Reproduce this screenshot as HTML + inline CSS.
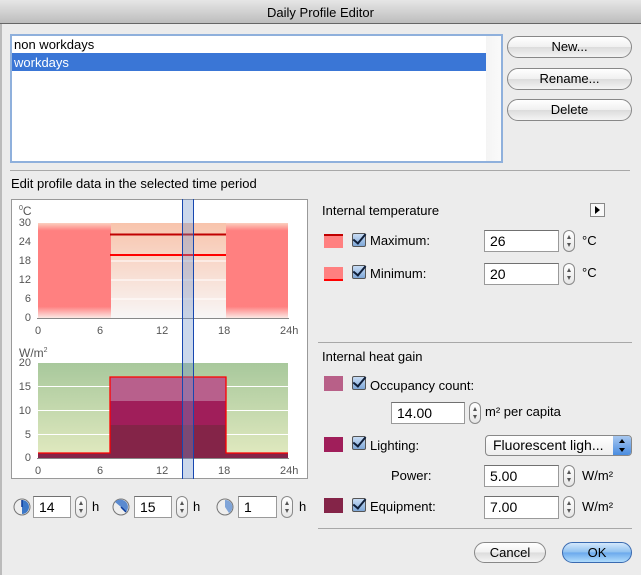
<!DOCTYPE html>
<html><head><meta charset="utf-8"><style>
*{box-sizing:border-box}
body{margin:0;width:641px;height:575px;background:#ececec;font-family:"Liberation Sans",sans-serif;font-size:13px;color:#000;position:relative;overflow:hidden}
.a{position:absolute}
.t{position:absolute;white-space:nowrap;line-height:16px}
.btn{position:absolute;border:1px solid #888;border-radius:11px;background:linear-gradient(#fff,#f0f0f0 50%,#dcdcdc 51%,#f4f4f4);text-align:center;line-height:20px;font-size:13px}
.inp{position:absolute;background:#fff;border:1px solid #9a9a9a;border-top-color:#707070;padding-left:5px;line-height:20px;font-size:14px}
.st{position:absolute;width:12px;height:22px;border:1px solid #8a8a8a;border-radius:6px;background:linear-gradient(#fff,#e6e6e6)}
.st:before{content:"";position:absolute;left:3px;top:4px;border:2.5px solid transparent;border-bottom:4px solid #555;border-top:0}
.st:after{content:"";position:absolute;left:3px;bottom:4px;border:2.5px solid transparent;border-top:4px solid #555;border-bottom:0}
.cb{position:absolute;width:14px;height:14px;border:1px solid #555;border-radius:2px;background:linear-gradient(#c8dcf4,#7fa8d8)}
.cb:after{content:"";position:absolute;left:3px;top:-3px;width:5px;height:11px;border:solid #0f1f3a;border-width:0 2.5px 2.5px 0;transform:rotate(40deg)}
.sw{position:absolute;width:19px;height:14px}
.line{position:absolute;height:1px;background:#a8a8a8}
.yl{position:absolute;font-size:11px;color:#555;text-align:right;width:20px}
.xl{position:absolute;font-size:11px;color:#555}
</style></head><body>
<div class="a" style="left:0;top:0;width:641px;height:24px;background:linear-gradient(#e6e6e6,#bdbdbd);border-bottom:1px solid #666"></div>
<div class="t" style="left:0;width:641px;text-align:center;top:5px">Daily Profile Editor</div>
<div class="a" style="left:0;top:24px;width:2px;height:551px;background:#bbb"></div>

<div class="a" style="left:10px;top:34px;width:493px;height:129px;border:2px solid #8fb0dc;background:#fff"></div>
<div class="a" style="left:486px;top:36px;width:15px;height:125px;background:linear-gradient(90deg,#f4f4f4,#fafafa)"></div>
<div class="t" style="left:14px;top:37px">non workdays</div>
<div class="a" style="left:12px;top:53px;width:474px;height:18px;background:#3a76d6"></div>
<div class="t" style="left:14px;top:55px;color:#fff">workdays</div>

<div class="btn" style="left:507px;top:36px;width:125px;height:22px">New...</div>
<div class="btn" style="left:507px;top:68px;width:125px;height:22px">Rename...</div>
<div class="btn" style="left:507px;top:99px;width:125px;height:22px">Delete</div>

<div class="line" style="left:10px;top:170px;width:620px"></div>
<div class="t" style="left:11px;top:176px">Edit profile data in the selected time period</div>

<div class="a" style="left:11px;top:199px;width:297px;height:280px;background:#fff;border:1px solid #999"></div>
<svg class="a" style="left:0;top:0" width="320" height="490">
<defs>
<linearGradient id="r" x1="0" y1="0" x2="0" y2="1"><stop offset="0" stop-color="#fbd0c0"/><stop offset=".08" stop-color="#ff8080"/><stop offset=".88" stop-color="#ff8080"/><stop offset="1" stop-color="#fbe8e4"/></linearGradient>
<linearGradient id="m" x1="0" y1="0" x2="0" y2="1"><stop offset="0" stop-color="#f8c4ac"/><stop offset=".5" stop-color="#f8dcd0"/><stop offset="1" stop-color="#f8f6f6"/></linearGradient>
<linearGradient id="g" x1="0" y1="0" x2="0" y2="1"><stop offset="0" stop-color="#a8c89c"/><stop offset="1" stop-color="#e2eac0"/></linearGradient>
</defs>
<rect x="38" y="223" width="73" height="95" fill="url(#r)"/>
<rect x="226" y="223" width="62" height="95" fill="url(#r)"/>
<rect x="111" y="223" width="115" height="95" fill="url(#m)"/>
<g stroke="#fff" stroke-width="1"><line x1="111" x2="226" y1="261" y2="261"/><line x1="111" x2="226" y1="280" y2="280"/><line x1="111" x2="226" y1="299" y2="299"/></g>
<line x1="110" x2="226" y1="234.5" y2="234.5" stroke="#c00000" stroke-width="2"/>
<line x1="110" x2="226" y1="255" y2="255" stroke="#ff0000" stroke-width="2"/>
<line x1="37" x2="289" y1="318.5" y2="318.5" stroke="#888"/>
<rect x="38" y="363" width="250" height="95" fill="url(#g)"/>
<g stroke="#fff"><line x1="38" x2="288" y1="386.5" y2="386.5"/><line x1="38" x2="288" y1="410.5" y2="410.5"/><line x1="38" x2="288" y1="434.5" y2="434.5"/></g>
<rect x="38" y="453" width="73" height="5" fill="#842448"/>
<rect x="226" y="453" width="62" height="5" fill="#842448"/>
<rect x="110" y="424.8" width="116" height="33.2" fill="#842448"/>
<rect x="110" y="401" width="116" height="24" fill="#a01e5a"/>
<rect x="110" y="377" width="116" height="24" fill="#b8608c"/>
<path d="M38 453H110V377H226V453H288" fill="none" stroke="#f00" stroke-width="1.3"/>
<line x1="37" x2="289" y1="458.5" y2="458.5" stroke="#888"/>
<rect x="183" y="199" width="10" height="280" fill="#6a90c8" fill-opacity=".35"/>
<line x1="182.5" x2="182.5" y1="199" y2="479" stroke="#1848b0"/>
<line x1="193.5" x2="193.5" y1="199" y2="479" stroke="#1848b0"/>
</svg>
<div class="t" style="left:19px;top:201px;font-size:12px;color:#555"><sup style="font-size:7px">0</sup>C</div>
<div class="yl" style="left:11px;top:217px">30</div>
<div class="yl" style="left:11px;top:236px">24</div>
<div class="yl" style="left:11px;top:255px">18</div>
<div class="yl" style="left:11px;top:274px">12</div>
<div class="yl" style="left:11px;top:293px">6</div>
<div class="yl" style="left:11px;top:312px">0</div>
<div class="xl" style="left:35px;top:325px">0</div>
<div class="xl" style="left:97px;top:325px">6</div>
<div class="xl" style="left:156px;top:325px">12</div>
<div class="xl" style="left:218px;top:325px">18</div>
<div class="xl" style="left:280px;top:325px">24h</div>
<div class="t" style="left:19px;top:343px;font-size:12px;color:#555">W/m<sup style="font-size:7px">2</sup></div>
<div class="yl" style="left:11px;top:357px">20</div>
<div class="yl" style="left:11px;top:381px">15</div>
<div class="yl" style="left:11px;top:405px">10</div>
<div class="yl" style="left:11px;top:429px">5</div>
<div class="yl" style="left:11px;top:452px">0</div>
<div class="xl" style="left:35px;top:465px">0</div>
<div class="xl" style="left:97px;top:465px">6</div>
<div class="xl" style="left:156px;top:465px">12</div>
<div class="xl" style="left:218px;top:465px">18</div>
<div class="xl" style="left:280px;top:465px">24h</div>

<svg class="a" style="left:13px;top:498px" width="18" height="18"><circle cx="9" cy="9" r="8" fill="#eee" stroke="#777"/><path d="M9 9V2A7 7 0 0 1 9 16Z" fill="#3c78c8"/><line x1="9" y1="9" x2="9" y2="2" stroke="#0a3a9a" stroke-width="1.5"/></svg>
<div class="inp" style="left:33px;top:496px;width:38px;height:22px">14</div>
<div class="st" style="left:75px;top:496px"></div><div class="t" style="left:92px;top:499px">h</div>
<svg class="a" style="left:112px;top:498px" width="18" height="18"><circle cx="9" cy="9" r="8" fill="#eee" stroke="#777"/><path d="M9 9L3 4A7 7 0 0 1 14 14Z" fill="#5a8ad0"/><line x1="9" y1="9" x2="14" y2="14" stroke="#0a3a9a" stroke-width="1.5"/></svg>
<div class="inp" style="left:134px;top:496px;width:38px;height:22px">15</div>
<div class="st" style="left:176px;top:496px"></div><div class="t" style="left:193px;top:499px">h</div>
<svg class="a" style="left:216px;top:498px" width="18" height="18"><circle cx="9" cy="9" r="8" fill="#eee" stroke="#777"/><path d="M9 9V2A7 7 0 0 1 13 15Z" fill="#7fa4d8"/></svg>
<div class="inp" style="left:238px;top:496px;width:39px;height:22px">1</div>
<div class="st" style="left:281px;top:496px"></div><div class="t" style="left:299px;top:499px">h</div>

<div class="t" style="left:322px;top:203px">Internal temperature</div>
<div class="a" style="left:590px;top:203px;width:15px;height:14px;border:1px solid #888;background:#f8f8f8"></div>
<div class="a" style="left:595px;top:206px;border:4px solid transparent;border-left:5px solid #000;border-right:0"></div>

<div class="sw" style="left:324px;top:234px;background:#ff8080;border-top:2px solid #c00000"></div>
<div class="cb" style="left:352px;top:233px"></div>
<div class="t" style="left:370px;top:233px">Maximum:</div>
<div class="inp" style="left:484px;top:230px;width:75px;height:22px">26</div>
<div class="st" style="left:563px;top:230px"></div><div class="t" style="left:582px;top:233px">°C</div>

<div class="sw" style="left:324px;top:267px;background:#ff8080;border-bottom:2px solid #f00"></div>
<div class="cb" style="left:352px;top:265px"></div>
<div class="t" style="left:370px;top:266px">Minimum:</div>
<div class="inp" style="left:484px;top:263px;width:75px;height:22px">20</div>
<div class="st" style="left:563px;top:263px"></div><div class="t" style="left:582px;top:265px">°C</div>

<div class="line" style="left:318px;top:342px;width:314px"></div>
<div class="t" style="left:322px;top:349px">Internal heat gain</div>

<div class="sw" style="left:324px;top:376px;background:#b86088;height:15px"></div>
<div class="cb" style="left:352px;top:376px"></div>
<div class="t" style="left:370px;top:378px">Occupancy count:</div>
<div class="inp" style="left:391px;top:402px;width:74px;height:22px">14.00</div>
<div class="st" style="left:469px;top:402px"></div><div class="t" style="left:485px;top:404px">m² per capita</div>

<div class="sw" style="left:324px;top:437px;background:#a01e5a;height:15px"></div>
<div class="cb" style="left:352px;top:436px"></div>
<div class="t" style="left:370px;top:438px">Lighting:</div>
<div class="a" style="left:485px;top:435px;width:147px;height:21px;border:1px solid #888;border-radius:4px;background:linear-gradient(#fff,#eee)"></div>
<div class="a" style="left:613px;top:436px;width:18px;height:19px;border-radius:0 3px 3px 0;background:linear-gradient(#a8c8f0,#4a8ce0)"></div>
<div class="a" style="left:619px;top:439px;border:3px solid transparent;border-bottom:4px solid #000;border-top:0"></div>
<div class="a" style="left:619px;top:448px;border:3px solid transparent;border-top:4px solid #000;border-bottom:0"></div>
<div class="t" style="left:493px;top:437px;font-size:14px">Fluorescent ligh...</div>

<div class="t" style="left:391px;top:468px">Power:</div>
<div class="inp" style="left:484px;top:465px;width:75px;height:22px">5.00</div>
<div class="st" style="left:563px;top:465px"></div><div class="t" style="left:582px;top:468px">W/m²</div>

<div class="sw" style="left:324px;top:498px;background:#842448;height:15px"></div>
<div class="cb" style="left:352px;top:498px"></div>
<div class="t" style="left:370px;top:499px">Equipment:</div>
<div class="inp" style="left:484px;top:496px;width:75px;height:23px">7.00</div>
<div class="st" style="left:563px;top:496px"></div><div class="t" style="left:582px;top:499px">W/m²</div>

<div class="line" style="left:318px;top:528px;width:314px"></div>
<div class="btn" style="left:474px;top:542px;width:72px;height:21px;line-height:19px">Cancel</div>
<div class="btn" style="left:562px;top:542px;width:70px;height:21px;line-height:19px;border-color:#3a6ab0;background:linear-gradient(#d4e8fc,#8cc0f0 50%,#6aa8ec 51%,#b0dcfc)">OK</div>
</body></html>
